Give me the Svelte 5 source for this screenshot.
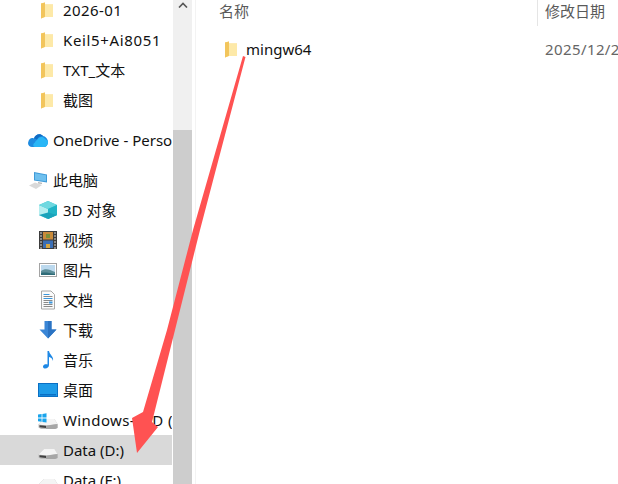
<script>
  const quick = [
    { label: '2026-01', cls: 'digits' },
    { label: 'Keil5+Ai8051', cls: 'digits-wide' },
    { label: 'TXT_文本', cls: 'cjk' },
    { label: '截图', cls: 'cjk' }
  ];
  const libs = [
    { id: 'cube', label: '3D 对象', cls: 'cjk' },
    { id: 'film', label: '视频', cls: 'cjk' },
    { id: 'pic', label: '图片', cls: 'cjk' },
    { id: 'doc', label: '文档', cls: 'cjk' },
    { id: 'down', label: '下载', cls: 'cjk' },
    { id: 'music', label: '音乐', cls: 'cjk' },
    { id: 'desk', label: '桌面', cls: 'cjk' },
    { id: 'win', label: 'Windows-SSD (C:)', cls: 'digits' },
    { id: 'drive', label: 'Data (D:)', selected: true },
    { id: 'drive', label: 'Data (F:)' }
  ];
</script>

{#snippet folder()}
  <svg class="ic-folder" width="14" height="18" viewBox="0 0 14 18">
    <path d="M1 2.500 L5 1.500 V3.500 H13 V16 H5 L1 17.500 Z" fill="#fbdc86" />
    <path d="M5 3.500 H13 V16 H5 Z" fill="#fde9a8" />
    <path d="M1 2.500 L5 1.500 V15.800 L1 17.500 Z" fill="#f2c55c" />
  </svg>
{/snippet}

{#snippet icon(id)}
  <svg class="ic" width="20" height="20" viewBox="0 0 20 20">
    {#if id === 'cube'}
      <path d="M10 1 L19 5 V15 L10 19 L1 15 V5 Z" fill="#37c6d0" />
      <path d="M1 5 L10 9 V19 L1 15 Z" fill="#b5eef0" />
      <path d="M10 1 L19 5 L10 9 L1 5 Z" fill="#6fd8e0" />
      <path d="M10 9 L19 5 V15 L10 19 Z" fill="#22b4c6" />
      <path d="M1 15 L10 12.500 L19 15 L10 19 Z" fill="#1ba3bb" />
    {:else if id === 'film'}
      <rect x="1" y="1" width="18" height="18" fill="#3c3c3c" />
      <rect x="5" y="2" width="10" height="7.500" fill="#c98a3a" />
      <rect x="5" y="10.500" width="10" height="7.500" fill="#3b6fb5" />
      <rect x="8" y="4" width="4" height="4" fill="#7a8f3a" />
      <rect x="8" y="14" width="4" height="4" fill="#d6a63f" />
      <path d="M2 3h2M2 6h2M2 9h2M2 12h2M2 15h2M2 18h2M16 3h2M16 6h2M16 9h2M16 12h2M16 15h2M16 18h2" stroke="#d8d8d8" stroke-width="1.200" />
    {:else if id === 'pic'}
      <rect x="1.500" y="3.500" width="17" height="13" fill="#fff" stroke="#a3a3a3" />
      <rect x="3" y="5" width="14" height="10" fill="#bcd9ee" />
      <path d="M3 11 C7 8 11 9 17 12 V15 H3 Z" fill="#5e8f9a" />
      <path d="M3 13 C7 12 11 13 17 14 V15 H3 Z" fill="#2f6c78" />
    {:else if id === 'doc'}
      <path d="M3.500 1 H13 L16.500 4.500 V19 H3.500 Z" fill="#fbfbfb" stroke="#a8a8a8" />
      <path d="M5.500 4.500h6M5.500 8.500h9" stroke="#3a96dd" stroke-width="1" />
      <path d="M5.500 6.500h9M5.500 10.500h9M5.500 12.500h5M5.500 14.500h9M5.500 16.500h9" stroke="#8a8a8a" stroke-width="1" />
      <rect x="11" y="11.500" width="3.500" height="2" fill="#3a96dd" />
    {:else if id === 'down'}
      <path d="M6.500 1 H13.500 V9.500 H18.500 L10 18.500 L1.500 9.500 H6.500 Z" fill="#3a86d6" />
      <path d="M10 1 H13.500 V9.500 H18.500 L10 18.500 Z" fill="#2b73c2" />
    {:else if id === 'music'}
      <path d="M9.500 1 H11 C11.500 5 16 6 15 11 C14.500 8.500 13 7.500 11 7 V15 C11 17.500 8.500 19 6.500 18.500 C4.500 18 4.500 15.500 6.500 14.500 C7.500 14 8.700 14 9.500 14.500 Z" fill="#1e88e5" />
    {:else if id === 'desk'}
      <rect x="0.500" y="3.500" width="19" height="13" fill="#1e9be8" stroke="#0b6fc4" />
      <rect x="2" y="14" width="16" height="1.500" fill="#0b6fc4" />
    {:else if id === 'win' || id === 'drive'}
      <path d="M0.500 14.500 L6 9 H16.500 L19.500 14 V18 L17 19 H3 L0.500 17.500 Z" fill="#bdbdbd" />
      <path d="M0.500 14.500 L6 9 H16.500 L19.500 14 L8 15.500 Z" fill="#f4f4f4" />
      <path d="M1.500 15.300 L8 15.800 V18 L1.500 17.300 Z" fill="#3f3f3f" />
      <path d="M8 15.800 L19.500 14 V18 L17 19 H8 Z" fill="#a6a6a6" />
      {#if id === 'win'}
        <path d="M0 4.500 L3.600 4 V7.600 H0 Z M4.400 3.900 L8.500 3.300 V7.600 H4.400 Z M0 8.400 H3.600 V11.800 L0 11.300 Z M4.400 8.400 H8.500 V12.600 L4.400 12 Z" fill="#19a4ec" />
      {/if}
    {/if}
  </svg>
{/snippet}

<div class="window">
  <nav class="tree">
    {#each quick as item}
      <div class="row sub">{@render folder()}<span class={item.cls}>{item.label}</span></div>
    {/each}

    <div class="row top spaced">
      <svg class="ic" width="20" height="14" viewBox="0 0 20 14">
        <path d="M0 10 C1 5 4 4.500 6 5.500 C7 1.500 12 -0.500 15 3 C18 3.500 20 6.500 20 9 C20 12 18 14 16 14 H4 C2 14 0 12.500 0 10 Z" fill="#1e8be0" />
        <path d="M6 5.500 C7 1.500 12 -0.500 15 3 C12 3 10 4 9 6.500 C8 6 7 5.500 6 5.500 Z" fill="#0f6cc4" />
        <path d="M9 7 C11 3.500 15 3 17 6 C19 7 20 8 20 9 C20 12 18 14 16 14 H7 C5 14 4.500 11 7 9.500 C7.500 8 8 7.500 9 7 Z" fill="#29b6f6" />
      </svg>
      <span>OneDrive - Personal</span>
    </div>

    <div class="row top spaced">
      <svg class="ic" width="20" height="20" viewBox="0 0 20 20">
        <path d="M6 2 L19 4.500 V12.500 L6 10.500 Z" fill="#3f9ad8" />
        <path d="M7 3.200 L18 5.300 V11.300 L7 9.700 Z" fill="#6fc0ee" />
        <path d="M10 12 L14 12.700 V14 L10 13.500 Z" fill="#b7b7b7" />
        <path d="M1 15.500 L7 12.500 L14 15 L8 19 Z" fill="#d9d9d9" />
      </svg>
      <span class="cjk">此电脑</span>
    </div>

    {#each libs as item}
      <div class="row sub" class:selected={item.selected}>{@render icon(item.id)}<span class={item.cls}>{item.label}</span></div>
    {/each}
  </nav>

  <div class="scrollbar">
    <div class="up">
      <svg width="10" height="6" viewBox="0 0 10 6"><path d="M1 5.500 L5 1.500 L9 5.500" fill="none" stroke="#555" stroke-width="1.600" /></svg>
    </div>
    <div class="thumb"></div>
  </div>

  <main class="files">
    <div class="head">
      <div class="col-name">名称</div>
      <div class="col-date">修改日期</div>
    </div>
    <div class="file">
      <div class="col-name">{@render folder()}<span>mingw64</span></div>
      <div class="col-date digits">2025/12/22 10:15</div>
    </div>
  </main>

  <svg class="arrow" width="618" height="484" viewBox="0 0 618 484">
    <path d="M243 56 L245.500 57 L200 230 L175 330 L152 422 L158 427 L137 453 L132 418 L143 412 L167 330 L193 230 Z" fill="#ff5252" />
  </svg>
</div>

<style>
  :global(body) {
    background: #fff;
  }

  .window {
    position: relative;
    display: flex;
    width: 618px;
    height: 484px;
    overflow: hidden;
    font-family: "Noto Sans", "Noto Sans CJK SC", sans-serif;
    font-size: 15px;
    color: #111;
    background: #fff;
  }

  .tree {
    width: 172px;
    flex: none;
    margin-top: -5px;
  }

  .row {
    display: flex;
    align-items: center;
    height: 30px;
    white-space: nowrap;
    overflow: hidden;
  }

  .row.sub {
    padding-left: 38px;
  }

  .row.top {
    padding-left: 28px;
  }

  .row.spaced {
    margin-top: 10px;
  }

  .row.selected {
    background: #d9d9d9;
  }

  .cjk {
    padding-bottom: 2px;
  }

  .digits {
    letter-spacing: 0.4px;
  }

  .digits-wide {
    letter-spacing: 0.65px;
  }

  .ic {
    flex: none;
    margin-right: 5px;
  }

  .ic-folder {
    flex: none;
    margin-left: 2px;
    margin-right: 9px;
  }

  .scrollbar {
    width: 19px;
    margin-left: 1px;
    flex: none;
    display: flex;
    flex-direction: column;
    background: #f0f0f0;
  }

  .up {
    height: 130px;
    display: flex;
    justify-content: center;
    align-items: flex-start;
    padding-top: 2px;
    box-sizing: border-box;
  }

  .thumb {
    flex: 1;
    background: #cdcdcd;
  }

  .files {
    flex: 1;
    min-width: 0;
    margin-left: 3px;
    border-left: 1px solid #f3f3f3;
  }

  .head,
  .file {
    display: grid;
    grid-template-columns: 341px 1fr;
    white-space: nowrap;
  }

  .head {
    height: 26px;
    margin-bottom: 8px;
    color: #5a5a5a;
    line-height: 22px;
  }

  .head .col-name {
    padding-left: 23px;
  }

  .head .col-date {
    border-left: 1px solid #e5e5e5;
    padding-left: 7px;
  }

  .file {
    height: 30px;
    align-items: center;
  }

  .file .col-name {
    display: flex;
    align-items: center;
    padding-left: 26px;
  }

  .file .ic-folder {
    margin-right: 8px;
  }

  .file .col-date {
    padding-left: 8px;
    color: #666;
  }

  .arrow {
    position: absolute;
    left: 0;
    top: 0;
    pointer-events: none;
  }
</style>
